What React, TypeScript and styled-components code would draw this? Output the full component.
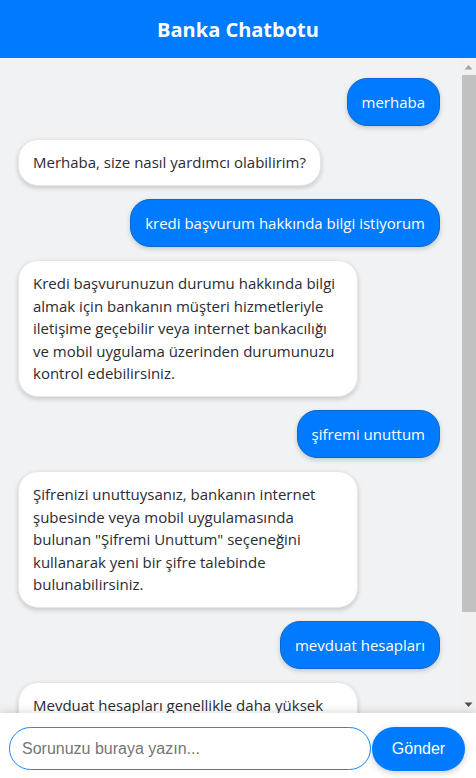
import React, { useLayoutEffect, useRef, useState } from "react";
import styled, { createGlobalStyle } from "styled-components";

const Global = createGlobalStyle`
  html, body { margin: 0; padding: 0; height: 100%; }
  body { font-family: "Open Sans", "Noto Sans", sans-serif; background: #ffffff; }
  #root { height: 100%; }
  * { box-sizing: border-box; }
`;

const Shell = styled.div`
  display: flex;
  flex-direction: column;
  height: 100vh;
  background: #f1f2f4;
`;

const Header = styled.header`
  flex: 0 0 58px;
  display: flex;
  align-items: center;
  justify-content: center;
  background: #007bff;
  color: #ffffff;
  font-size: 20px;
  font-weight: 700;
`;

const Body = styled.div`
  flex: 1 1 auto;
  min-height: 0;
  display: flex;
`;

const ChatArea = styled.div`
  flex: 1 1 auto;
  min-width: 0;
  overflow-y: auto;
  scrollbar-width: none;
  padding: 20px 21px 20px 18px;
  display: flex;
  flex-direction: column;
  gap: 13.5px;
  &::-webkit-scrollbar { display: none; }
`;

const Rail = styled.div`
  flex: 0 0 15px;
  display: flex;
  flex-direction: column;
  background: #f1f1f1;
`;

const RailButton = styled.div`
  flex: 0 0 17px;
  display: flex;
  align-items: center;
  justify-content: center;
`;

const Track = styled.div`
  flex: 1 1 auto;
  display: flex;
  flex-direction: column;
`;

const Thumb = styled.div`
  flex: 0 0 auto;
  margin: 0 0 0 1px;
  background: #c1c1c1;
`;

const Bubble = styled.div<{ $user?: boolean }>`
  max-width: 340px;
  padding: ${(p) => (p.$user ? "11.5px 14px" : "11px 14px")};
  border-radius: 20px;
  font-size: 15px;
  line-height: 22.5px;
  align-self: ${(p) => (p.$user ? "flex-end" : "flex-start")};
  background: ${(p) => (p.$user ? "#007bff" : "#ffffff")};
  color: ${(p) => (p.$user ? "#ffffff" : "#2b2b33")};
  border: 1px solid ${(p) => (p.$user ? "#0a68d0" : "#e6e6e6")};
  box-shadow: 0 2px 5px rgba(0, 0, 0, 0.18);
  flex-shrink: 0;
`;

const InputBar = styled.form`
  flex: 0 0 65px;
  display: flex;
  align-items: flex-start;
  padding: 14px 11px 0 9px;
  background: #ffffff;
  box-shadow: 0 -2px 8px rgba(0, 0, 0, 0.12);
  position: relative;
  z-index: 1;
`;

const TextInput = styled.input`
  flex: 1 1 auto;
  min-width: 0;
  height: 43px;
  padding: 0 12px;
  border: 1px solid #1a86ff;
  border-radius: 22px;
  font-family: "Liberation Sans", Arial, sans-serif;
  font-size: 16px;
  color: #333;
  outline: none;
  &::placeholder { color: #757575; }
`;

const SendButton = styled.button`
  flex: 0 0 93px;
  height: 44px;
  margin-left: 1px;
  border: none;
  border-radius: 22px;
  background: #007bff;
  color: #ffffff;
  font-family: "Liberation Sans", Arial, sans-serif;
  font-size: 16px;
  box-shadow: 0 2px 6px rgba(0, 0, 0, 0.2);
  cursor: pointer;
`;

const messages: { user: boolean; text: string }[] = [
  { user: true, text: "merhaba" },
  { user: false, text: "Merhaba, size nasıl yardımcı olabilirim?" },
  { user: true, text: "kredi başvurum hakkında bilgi istiyorum" },
  {
    user: false,
    text: "Kredi başvurunuzun durumu hakkında bilgi almak için bankanın müşteri hizmetleriyle iletişime geçebilir veya internet bankacılığı ve mobil uygulama üzerinden durumunuzu kontrol edebilirsiniz.",
  },
  { user: true, text: "şifremi unuttum" },
  {
    user: false,
    text: 'Şifrenizi unuttuysanız, bankanın internet şubesinde veya mobil uygulamasında bulunan "Şifremi Unuttum" seçeneğini kullanarak yeni bir şifre talebinde bulunabilirsiniz.',
  },
  { user: true, text: "mevduat hesapları" },
  {
    user: false,
    text: "Mevduat hesapları genellikle daha yüksek faiz getirisi sunar ve paranızı belirli bir vade boyunca bankada tutmanızı gerektirir. Detaylı bilgi için şubenize başvurabilirsiniz.",
  },
];

function Arrow({ down }: { down?: boolean }) {
  return (
    <svg width="9" height="6" viewBox="0 0 9 6">
      <path
        d={down ? "M0.5 0.5 L8.5 0.5 L4.5 5 Z" : "M0.5 5.5 L8.5 5.5 L4.5 1 Z"}
        fill={down ? "#505050" : "#a3a3a3"}
      />
    </svg>
  );
}

export default function App() {
  const chatRef = useRef<HTMLDivElement>(null);
  const trackRef = useRef<HTMLDivElement>(null);
  const [thumb, setThumb] = useState({ top: 0, height: 0 });

  useLayoutEffect(() => {
    const el = chatRef.current;
    const tr = trackRef.current;
    if (!el || !tr) return;
    const update = () => {
      const th = tr.clientHeight;
      const ratio = el.clientHeight / el.scrollHeight;
      const h = Math.max(20, th * Math.min(1, ratio));
      const maxScroll = el.scrollHeight - el.clientHeight;
      const top = maxScroll > 0 ? (el.scrollTop / maxScroll) * (th - h) : 0;
      setThumb({ top, height: h });
    };
    update();
    el.addEventListener("scroll", update);
    window.addEventListener("resize", update);
    return () => {
      el.removeEventListener("scroll", update);
      window.removeEventListener("resize", update);
    };
  }, []);

  return (
    <>
      <Global />
      <Shell>
        <Header>Banka Chatbotu</Header>
        <Body>
          <ChatArea ref={chatRef}>
            {messages.map((m, i) => (
              <Bubble key={i} $user={m.user}>
                {m.text}
              </Bubble>
            ))}
          </ChatArea>
          <Rail>
            <RailButton>
              <Arrow />
            </RailButton>
            <Track ref={trackRef}>
              <Thumb style={{ marginTop: thumb.top, height: thumb.height }} />
            </Track>
            <RailButton>
              <Arrow down />
            </RailButton>
          </Rail>
        </Body>
        <InputBar onSubmit={(e) => e.preventDefault()}>
          <TextInput placeholder="Sorunuzu buraya yazın..." />
          <SendButton type="submit">Gönder</SendButton>
        </InputBar>
      </Shell>
    </>
  );
}
